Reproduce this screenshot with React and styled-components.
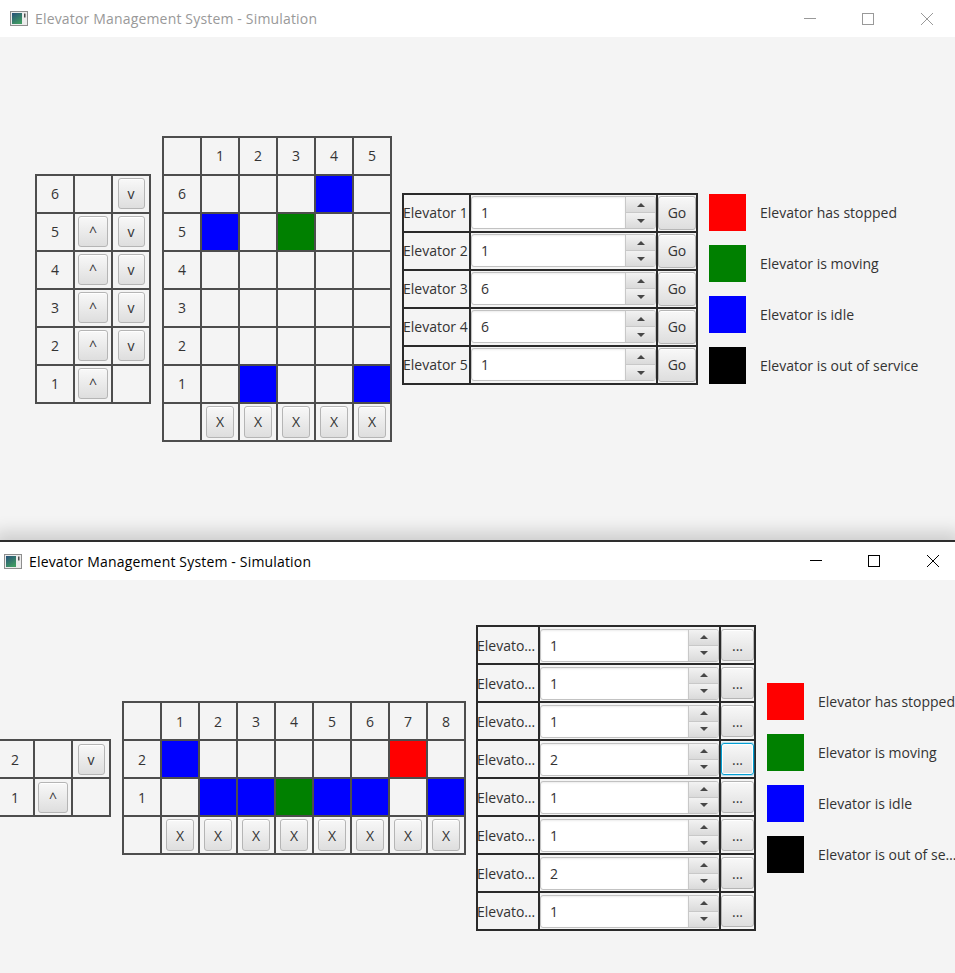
import React from 'react';
import styled, { createGlobalStyle, css } from 'styled-components';

const GlobalStyle = createGlobalStyle`
    html, body {
        margin: 0;
        padding: 0;
    }
    body {
        background: #f4f4f4;
        font-family: "Open Sans", "Noto Sans", "Liberation Sans", sans-serif;
        font-size: 14px;
        color: #333;
        overflow: hidden;
    }
`;

const STATE_COLORS = {
    stopped: '#ff0000',
    moving: '#008000',
    idle: '#0000ff',
    out: '#000000',
};

const LEGEND = [
    { state: 'stopped', text: 'Elevator has stopped' },
    { state: 'moving', text: 'Elevator is moving' },
    { state: 'idle', text: 'Elevator is idle' },
    { state: 'out', text: 'Elevator is out of service' },
];

const Screen = styled.div`
    width: 955px;
    height: 973px;
    overflow: hidden;
    display: flex;
    flex-direction: column;
`;

const Window = styled.div`
    flex: none;
    display: flex;
    flex-direction: column;
    height: ${p => p.$height}px;
    margin: 0 ${p => -(p.$bleed || 0)}px;
    background: #f4f4f4;
    position: relative;
    ${p => p.$active && css`
        border-top: 2px solid #2e2e2e;
        box-shadow: 0 -8px 16px rgba(0, 0, 0, 0.16);
    `}
`;

const TitleBar = styled.div`
    flex: none;
    height: ${p => p.$height}px;
    background: #fff;
    display: flex;
    align-items: center;
    padding-left: 10px;
    color: ${p => (p.$active ? '#000' : '#999')};
`;

const TitleText = styled.span`
    margin-left: 7px;
    font-size: 14px;
    letter-spacing: 0.17px;
    white-space: nowrap;
`;

const Captions = styled.div`
    margin-left: auto;
    display: flex;
    height: 100%;
`;

const CaptionButton = styled.div`
    width: ${p => p.$w}px;
    height: 100%;
    display: flex;
    align-items: center;
    justify-content: center;

    svg {
        display: block;
    }
`;

const Content = styled.div`
    flex: 1;
    display: flex;
    align-items: center;
    gap: 11px;
    padding-left: ${p => p.$pad}px;
    overflow: hidden;
`;

const Table = styled.div`
    flex: none;
    display: grid;
    grid-template-columns: ${p => p.$cols};
    grid-auto-rows: 36px;
    gap: 2px;
    padding: 2px;
    background: ${p => p.$line || '#4d4d4d'};
    margin-right: ${p => p.$shift || 0}px;
`;

const Cell = styled.div`
    background: ${p => p.$fill || '#f4f4f4'};
    display: flex;
    align-items: center;
    justify-content: ${p => p.$align || 'center'};
    min-width: 0;
    font-size: 14px;
`;

const CellLabel = styled.span`
    white-space: nowrap;
    overflow: hidden;
    text-overflow: ellipsis;
    margin-left: -1px;
`;

const PushButton = styled.button`
    box-sizing: border-box;
    width: ${p => (p.$w ? `${p.$w}px` : '100%')};
    height: ${p => p.$h || 32}px;
    padding: 0;
    font-family: inherit;
    font-size: 14px;
    color: #333;
    background: linear-gradient(#f8f8f8, #dedede);
    border: 1px solid #b5b5b5;
    border-radius: 3px;
    box-shadow: inset 0 1px 0 #fff;
    display: flex;
    align-items: center;
    justify-content: center;
    ${p => p.$focused && css`
        border-color: #039ed3;
        box-shadow: inset 0 0 0 1px #fff, 0 0 0 1px rgba(3, 158, 211, 0.25);
    `}
`;

const Spinner = styled.div`
    box-sizing: border-box;
    width: 100%;
    height: 33px;
    display: flex;
    border: 1px solid #c2c2c2;
    border-radius: 3px;
    background: #fff;
    overflow: hidden;
`;

const SpinnerField = styled.div`
    flex: 1;
    display: flex;
    align-items: center;
    padding-left: 9px;
    font-size: 14px;
    color: #333;
    box-shadow: inset 0 1px 2px rgba(0, 0, 0, 0.08);
`;

const SpinnerArrows = styled.div`
    flex: none;
    width: 29px;
    display: flex;
    flex-direction: column;
    border-left: 1px solid #c8c8c8;
`;

const ArrowButton = styled.div`
    flex: 1;
    display: flex;
    align-items: center;
    justify-content: center;
    background: linear-gradient(#f2f2f2, #dadada);
    & + & {
        border-top: 1px solid #c8c8c8;
    }

    &::after {
        content: '';
        width: 0;
        height: 0;
        border-left: 4px solid transparent;
        border-right: 4px solid transparent;
        ${p => (p.$dir === 'up'
            ? 'border-bottom: 4px solid #474747;'
            : 'border-top: 4px solid #474747;')}
    }
`;

const Legend = styled.div`
    flex: none;
    display: flex;
    flex-direction: column;
    gap: 14px;
`;

const LegendRow = styled.div`
    display: flex;
    align-items: center;
    gap: 14px;
`;

const Swatch = styled.div`
    width: 37px;
    height: 37px;
    background: ${p => p.$color};
`;

const LegendLabel = styled.span`
    font-size: 14px;
    white-space: nowrap;
    ${p => p.$max && css`
        max-width: ${p.$max}px;
        overflow: hidden;
        text-overflow: ellipsis;
    `}
`;

function AppIcon() {
    return (
        <svg width="18" height="15" viewBox="0 0 18 15">
            <defs>
                <linearGradient id="appIconFill" x1="0" y1="0" x2="0.6" y2="1">
                    <stop offset="0" stopColor="#27507a" />
                    <stop offset="1" stopColor="#3f9a62" />
                </linearGradient>
            </defs>
            <rect x="0.5" y="0.5" width="17" height="14" fill="#ececec" stroke="#8e8e8e" />
            <rect x="2" y="2" width="10" height="11" fill="url(#appIconFill)" />
            <rect x="14" y="2.5" width="1.5" height="4" fill="#4d4d4d" />
        </svg>
    );
}

function WindowTitle({ active }) {
    const stroke = active ? '#000' : '#999';
    return (
        <TitleBar $active={active} $height={active ? 38 : 37}>
            <AppIcon />
            <TitleText>Elevator Management System - Simulation</TitleText>
            <Captions>
                <CaptionButton $w={54}>
                    <svg width="12" height="12" viewBox="0 0 12 12">
                        <path d="M0 5.5H12" stroke={stroke} strokeWidth="1" />
                    </svg>
                </CaptionButton>
                <CaptionButton $w={62}>
                    <svg width="12" height="12" viewBox="0 0 12 12">
                        <rect x="0.5" y="0.5" width="11" height="11" fill="none" stroke={stroke} />
                    </svg>
                </CaptionButton>
                <CaptionButton $w={56}>
                    <svg width="12" height="12" viewBox="0 0 12 12">
                        <path d="M0 0L12 12M12 0L0 12" stroke={stroke} strokeWidth="1" />
                    </svg>
                </CaptionButton>
            </Captions>
        </TitleBar>
    );
}

function FloorPanel({ floors }) {
    const top = Math.max(...floors);
    return (
        <Table $cols="repeat(3, 36px)">
            {floors.map(f => (
                <React.Fragment key={f}>
                    <Cell>{f}</Cell>
                    <Cell>{f < top && <PushButton $w={30} $h={31}>^</PushButton>}</Cell>
                    <Cell>{f > 1 && <PushButton $w={27} $h={31}>v</PushButton>}</Cell>
                </React.Fragment>
            ))}
        </Table>
    );
}

function ShaftGrid({ floors, count, cars }) {
    const cols = Array.from({ length: count }, (_, i) => i + 1);
    return (
        <Table $cols={`repeat(${count + 1}, 36px)`} $shift={-1}>
            <Cell />
            {cols.map(c => <Cell key={c}>{c}</Cell>)}
            {floors.map(f => (
                <React.Fragment key={f}>
                    <Cell>{f}</Cell>
                    {cols.map(c => (
                        <Cell key={c} $fill={cars[f] && STATE_COLORS[cars[f][c]]} />
                    ))}
                </React.Fragment>
            ))}
            <Cell />
            {cols.map(c => (
                <Cell key={c}>
                    <PushButton $w={28} $h={32}>X</PushButton>
                </Cell>
            ))}
        </Table>
    );
}

function ControlPanel({ values, widths, action, focused }) {
    return (
        <Table $cols={widths.map(w => `${w}px`).join(' ')} $line="#2a2a2a">
            {values.map((v, i) => (
                <React.Fragment key={i}>
                    <Cell $align="flex-start">
                        <CellLabel>Elevator {i + 1}</CellLabel>
                    </Cell>
                    <Cell>
                        <Spinner>
                            <SpinnerField>{v}</SpinnerField>
                            <SpinnerArrows>
                                <ArrowButton $dir="up" />
                                <ArrowButton $dir="down" />
                            </SpinnerArrows>
                        </Spinner>
                    </Cell>
                    <Cell>
                        <PushButton $h={action === 'Go' ? 34 : 32} $focused={focused === i}>
                            {action}
                        </PushButton>
                    </Cell>
                </React.Fragment>
            ))}
        </Table>
    );
}

function StatusLegend({ labelMax }) {
    return (
        <Legend>
            {LEGEND.map(item => (
                <LegendRow key={item.state}>
                    <Swatch $color={STATE_COLORS[item.state]} />
                    <LegendLabel $max={labelMax}>{item.text}</LegendLabel>
                </LegendRow>
            ))}
        </Legend>
    );
}

const App = function App() {
    return (
        <Screen>
            <GlobalStyle />
            <Window $height={540}>
                <WindowTitle />
                <Content $pad={35}>
                    <FloorPanel floors={[6, 5, 4, 3, 2, 1]} />
                    <ShaftGrid
                        floors={[6, 5, 4, 3, 2, 1]}
                        count={5}
                        cars={{ 6: { 4: 'idle' }, 5: { 1: 'idle', 3: 'moving' }, 1: { 2: 'idle', 5: 'idle' } }}
                    />
                    <ControlPanel values={[1, 1, 6, 6, 1]} widths={[65, 185, 38]} action="Go" />
                    <StatusLegend />
                </Content>
            </Window>
            <Window $height={434} $bleed={6} $active>
                <WindowTitle active />
                <Content $pad={1}>
                    <FloorPanel floors={[2, 1]} />
                    <ShaftGrid
                        floors={[2, 1]}
                        count={8}
                        cars={{
                            2: { 1: 'idle', 7: 'stopped' },
                            1: { 2: 'idle', 3: 'idle', 4: 'moving', 5: 'idle', 6: 'idle', 8: 'idle' },
                        }}
                    />
                    <ControlPanel values={[1, 1, 1, 2, 1, 1, 2, 1]} widths={[60, 179, 33]} action="..." focused={3} />
                    <StatusLegend labelMax={140} />
                </Content>
            </Window>
        </Screen>
    );
};

export default App;
